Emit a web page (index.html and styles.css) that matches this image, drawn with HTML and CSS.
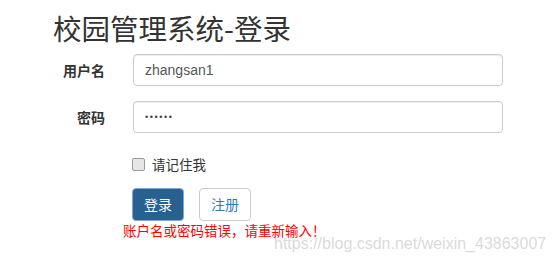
FILE: index.html
```html
<!DOCTYPE html>
<html lang="zh-CN">
<head>
<meta charset="utf-8">
<title>校园管理系统-登录</title>
<link rel="stylesheet" href="styles.css">
</head>
<body>
<div class="page">
  <h2 class="title">校园管理系统-登录</h2>
  <form class="form">
    <label class="label" for="u">用户名</label>
    <div class="field"><input id="u" class="input" type="text" value="zhangsan1"></div>
    <label class="label" for="p">密码</label>
    <div class="field"><input id="p" class="input pwd" type="text" value="••••••"></div>
    <div></div>
    <div class="remember"><span class="box"></span><span class="rtext">请记住我</span></div>
    <div></div>
    <div class="actions">
      <div class="buttons">
        <button type="button" class="btn btn-primary">登录</button>
        <button type="button" class="btn btn-default">注册</button>
      </div>
      <div class="error">账户名或密码错误，请重新输入！</div>
    </div>
  </form>
  <div class="watermark">https://blog.csdn.net/weixin_43863007</div>
</div>
</body>
</html>
```

FILE: styles.css
```css
html, body {
  margin: 0;
  padding: 0;
  background: #fff;
}
body {
  font-family: "Liberation Sans", "Noto Sans CJK SC", sans-serif;
  font-size: 14px;
  color: #333;
  width: 554px;
  height: 262px;
  overflow: hidden;
}
.page {
  position: relative;
  height: 262px;
}
.title {
  margin: 0;
  padding: 10px 0 0 53px;
  height: 44px;
  box-sizing: border-box;
  font-family: "Noto Sans CJK SC", sans-serif;
  font-weight: 400;
  font-size: 28.5px;
  line-height: 36px;
  color: #333;
}
.form {
  display: grid;
  grid-template-columns: 105px 370px;
  column-gap: 28px;
  row-gap: 15px;
  margin-top: 10px;
}
.label {
  text-align: right;
  font-family: "Noto Sans CJK SC", sans-serif;
  font-weight: 700;
  font-size: 14px;
  align-self: center;
  color: #333;
}
.input {
  display: block;
  width: 370px;
  height: 32px;
  box-sizing: border-box;
  padding: 6px 11px;
  border: 1px solid #ccc;
  border-radius: 4px;
  box-shadow: inset 0 1px 1px rgba(0,0,0,0.075);
  font-family: "Liberation Sans", sans-serif;
  font-size: 14px;
  color: #555;
  background: #fff;
  outline: none;
}
.pwd {
  font-size: 9px;
  letter-spacing: 1.6px;
  color: #444;
}
.remember {
  display: flex;
  align-items: center;
  height: 20px;
  margin-top: 6px;
  margin-left: -1px;
}
.box {
  width: 11px;
  height: 11px;
  border: 1px solid #9a9a9a;
  border-radius: 2px;
  background: #e6e6e6;
}
.rtext {
  margin-left: 7px;
  font-family: "Noto Sans CJK SC", sans-serif;
  font-size: 13.5px;
  color: #333;
}
.actions {
  margin-top: -1px;
  margin-left: -1px;
}
.buttons {
  display: flex;
  gap: 15px;
}
.btn {
  height: 33px;
  padding: 0 11px;
  border-radius: 4px;
  font-family: "Noto Sans CJK SC", sans-serif;
  font-size: 14px;
  line-height: 31px;
  cursor: pointer;
}
.btn-primary {
  background: #286090;
  border: 1px solid #7fa8d8;
  color: #fff;
}
.btn-default {
  background: #fff;
  border: 1px solid #ccc;
  color: #337ab7;
}
.error {
  margin-left: -9px;
  margin-top: 1px;
  font-family: "Noto Sans CJK SC", sans-serif;
  font-size: 13.5px;
  line-height: 16px;
  color: #ff0000;
}
.watermark {
  position: absolute;
  left: 274px;
  top: 235px;
  font-family: "Liberation Sans", sans-serif;
  font-size: 16px;
  line-height: 18px;
  color: rgba(180,180,180,0.5);
  white-space: nowrap;
}
```
